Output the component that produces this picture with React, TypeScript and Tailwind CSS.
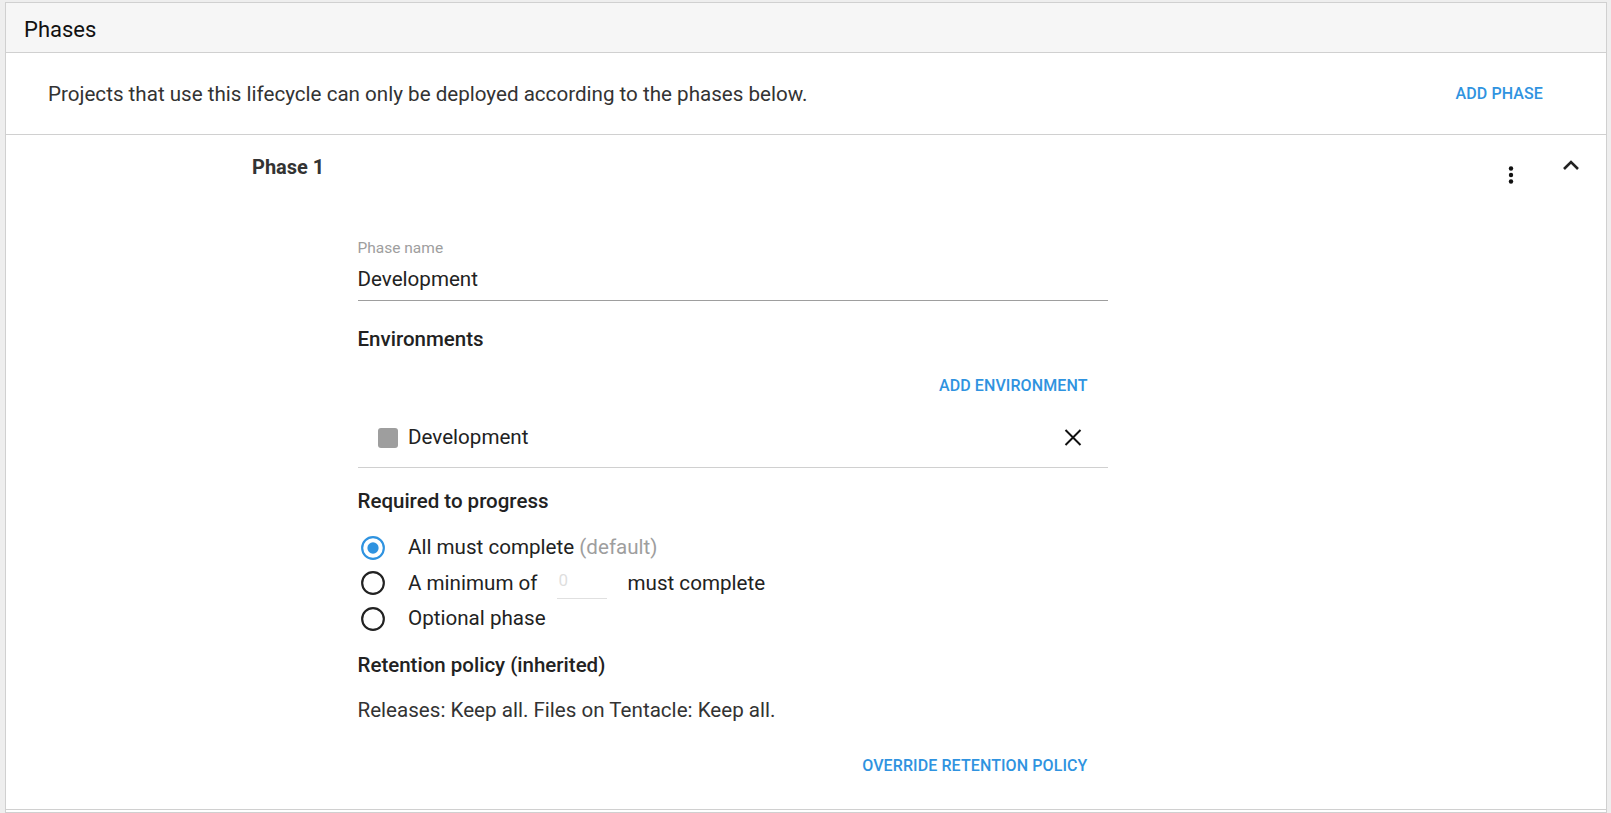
import { useState } from 'react';

const BLUE = 'text-[#2f93e0]';

function RadioIcon({ checked }: { checked: boolean }) {
  return (
    <svg width="26" height="26" viewBox="0 0 24 24" className="shrink-0">
      <circle
        cx="12"
        cy="12"
        r="10"
        fill="none"
        stroke={checked ? '#2f93e0' : '#222'}
        strokeWidth="2"
      />
      {checked && <circle cx="12" cy="12" r="5.2" fill="#2f93e0" />}
    </svg>
  );
}

function FlatButton({ label }: { label: string }) {
  return (
    <button
      className={`h-[45px] px-[20px] text-[16px] font-medium uppercase tracking-[0.1px] ${BLUE} hover:bg-[#2f93e0]/10 rounded-[2px]`}
    >
      {label}
    </button>
  );
}

export default function App() {
  const [progress, setProgress] = useState<'all' | 'min' | 'optional'>('all');
  const [phaseName, setPhaseName] = useState('Development');

  const radios: { key: 'all' | 'min' | 'optional'; content: React.ReactNode }[] = [
    {
      key: 'all',
      content: (
        <span>
          All must complete <span className="text-[#9e9e9e]">(default)</span>
        </span>
      ),
    },
    {
      key: 'min',
      content: (
        <span className="flex items-center">
          A minimum of
          <span className="relative ml-[20px] w-[50px] h-[31px] border-b border-[#e0e0e0]">
            <input
              className="absolute left-[1px] top-[-3px] w-full h-[30px] text-[17px] text-[#bdbdbd] outline-none bg-transparent"
              placeholder="0"
            />
          </span>
          <span className="ml-[20px]">must complete</span>
        </span>
      ),
    },
    { key: 'optional', content: <span>Optional phase</span> },
  ];

  return (
    <div className="min-h-screen bg-[#eeeeee] pl-[5px] pr-[4px] pt-[2px] font-['Roboto',sans-serif] text-[#222]">
      <div className="min-h-[811px] bg-white border border-[#d0d0d0]">
        {/* Header */}
        <div className="h-[50px] bg-[#f6f6f6] border-b border-[#d0d0d0] flex items-center pt-[3px] pl-[18px] text-[22px] text-[#111]">
          Phases
        </div>

        {/* Description */}
        <div className="h-[82px] flex items-center justify-between pl-[42px] pr-[43px] border-b border-[#d0d0d0]">
          <span className="text-[20.6px] leading-[24px] mt-[1px] text-[#333]">
            Projects that use this lifecycle can only be deployed according to the phases below.
          </span>
          <FlatButton label="Add phase" />
        </div>

        {/* Phase */}
        <div className="border-b border-[#d0d0d0] pb-[20px]">
          <div className="h-[55px] flex items-start">
            <div className="ml-[246px] mt-[20px] text-[20px] leading-[24px] font-bold text-[#333]">Phase 1</div>
            <div className="ml-auto flex items-start">
              <button className="mt-[28px] w-[24px] h-[24px] flex items-center justify-center">
                <svg width="24" height="24" viewBox="0 0 24 24">
                  <circle cx="12" cy="5.5" r="2.2" fill="#111" />
                  <circle cx="12" cy="12" r="2.2" fill="#111" />
                  <circle cx="12" cy="18.5" r="2.2" fill="#111" />
                </svg>
              </button>
              <button className="ml-[33px] mr-[20px] mt-[15px] w-[30px] h-[30px] flex items-center justify-center">
                <svg width="30" height="30" viewBox="0 0 30 30">
                  <polyline points="8,19 15,12 22,19" fill="none" stroke="#222" strokeWidth="2.6" />
                </svg>
              </button>
            </div>
          </div>

          <div className="ml-[351.5px] w-[750px]">
            {/* Phase name */}
            <div className="mt-[49px] text-[15.5px] leading-[18px] text-[#9e9e9e]">Phase name</div>
            <div className="mt-[10px] border-b border-[#9e9e9e] pb-[7px]">
              <input
                value={phaseName}
                onChange={(e) => setPhaseName(e.target.value)}
                className="w-full text-[20.6px] leading-[24px] h-[24px] outline-none text-[#222]"
              />
            </div>

            {/* Environments */}
            <div className="mt-[26px] text-[20.5px] leading-[24px] font-medium text-[#222]">Environments</div>
            <div className="mt-[12px] flex justify-end">
              <FlatButton label="Add environment" />
            </div>
            <div className="h-[60px] flex items-center border-b border-[#d0d0d0] pl-[20.5px] pr-[23px]">
              <span className="w-[20px] h-[20px] rounded-[3px] bg-[#9e9e9e]" />
              <span className="ml-[10px] text-[20.6px] text-[#222]">Development</span>
              <button className="ml-auto w-[24px] h-[24px] flex items-center justify-center">
                <svg width="24" height="24" viewBox="0 0 24 24">
                  <path d="M4.5 5.5 L19.5 20.5 M19.5 5.5 L4.5 20.5" stroke="#111" strokeWidth="2" fill="none" transform="translate(0,-1.5)" />
                </svg>
              </button>
            </div>

            {/* Required to progress */}
            <div className="mt-[21px] text-[20.5px] leading-[24px] font-medium text-[#222]">Required to progress</div>
            <div className="mt-[17px] flex flex-col">
              {radios.map((r) => (
                <label
                  key={r.key}
                  onClick={() => setProgress(r.key)}
                  className="h-[35.5px] flex items-center cursor-pointer text-[20.6px] text-[#222]"
                >
                  <span className="ml-[2.5px] flex">
                    <RadioIcon checked={progress === r.key} />
                  </span>
                  <span className="ml-[22px]">{r.content}</span>
                </label>
              ))}
            </div>

            {/* Retention */}
            <div className="mt-[16px] text-[20.5px] leading-[24px] font-medium text-[#222]">
              Retention policy (inherited)
            </div>
            <div className="mt-[21px] text-[20.6px] leading-[24px] text-[#333]">
              Releases: Keep all. Files on Tentacle: Keep all.
            </div>
            <div className="mt-[22px] flex justify-end">
              <FlatButton label="Override retention policy" />
            </div>
          </div>
        </div>
      </div>
    </div>
  );
}
